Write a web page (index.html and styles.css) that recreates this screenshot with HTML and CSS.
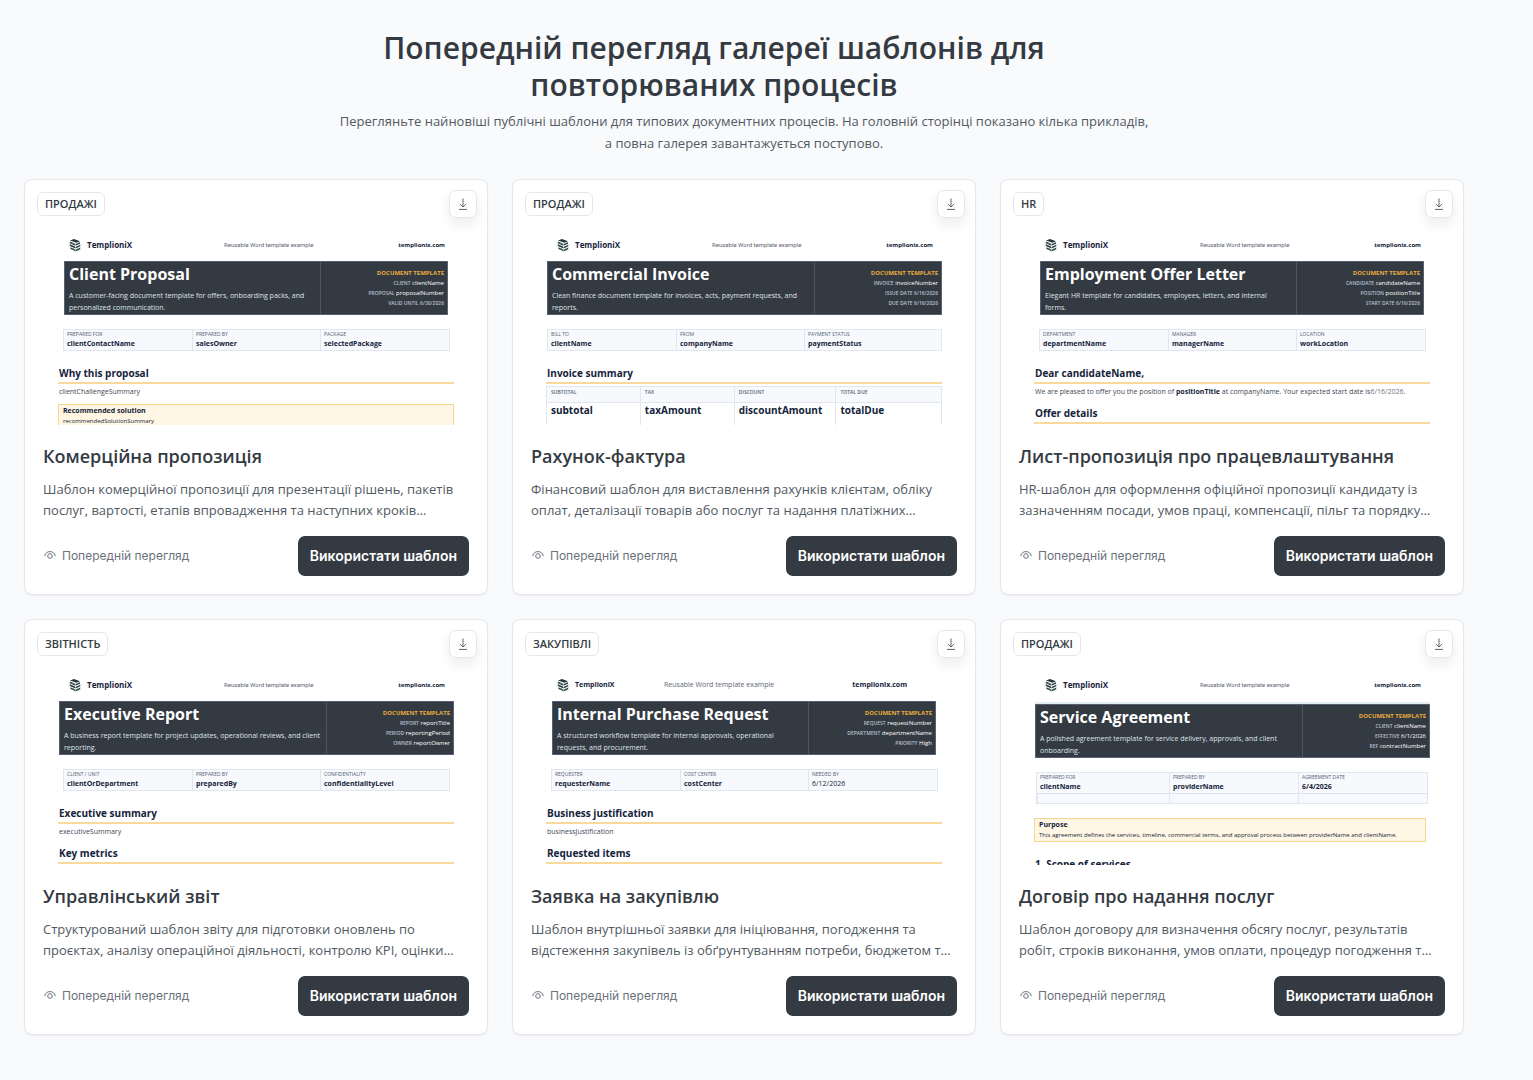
FILE: index.html
```html
<!DOCTYPE html>
<html lang="uk">
<head>
    <meta charset="UTF-8">
    <meta name="viewport" content="width=device-width, initial-scale=1.0">
    <title>TemplioniX</title>
    <link rel="stylesheet" href="styles.css">
</head>
<body>
    <!-- shared icons -->
    <svg class="sprite" aria-hidden="true">
        <symbol id="icon-download" viewBox="0 0 14 14">
            <path d="M7 1.5v8.3M3.9 7L7 10l3.1-3M3 12.4h8" fill="none" stroke="currentColor" stroke-width="1"/>
        </symbol>
        <symbol id="icon-eye" viewBox="0 0 14 14">
            <path d="M1.6 8.2C2.3 5 4.4 3.6 7 3.6s4.700 1.400 5.400 4.600" fill="none" stroke="currentColor" stroke-width="1"/>
            <circle cx="7" cy="8" r="2.300" fill="none" stroke="currentColor" stroke-width="1"/>
        </symbol>
        <symbol id="icon-logo" viewBox="0 0 14 14">
            <path d="M2 2.600L6 1l6 2.200-3.500 1.600zM2 3.500l5 2.300v1.700L2 5.200zM12 4.200v1.600L7.500 7.800V6.200zM2 6.300l5 2.300v1.700L2 8zM12 7v1.600l-4.500 2V9zM2.500 9.300L7 11.300V13L2.500 11zM12 9.800v1.500L7.500 13.400v-1.600z" fill="#26343c"/>
            <path d="M3.500 4.600l3.500 1.600 4.500-2M3.500 10.300L7 12l4-1.800M1.400 4v5M12.700 6v6" fill="none" stroke="#7fb5a5" stroke-width=".4"/>
        </symbol>
    </svg>

    <section class="gallery">
        <header class="gallery-header">
            <h1>Попередній перегляд галереї шаблонів для повторюваних процесів</h1>
            <p>Перегляньте найновіші публічні шаблони для типових документних процесів. На головній сторінці показано кілька прикладів, а повна галерея завантажується поступово.</p>
        </header>

        <div class="grid">
            <article class="card">
                <span class="badge">ПРОДАЖІ</span>
                <button type="button" class="download" aria-label="Завантажити"><svg><use href="#icon-download"/></svg></button>
                <div class="preview">
                    <div class="doc-head">
                        <span class="brand"><svg><use href="#icon-logo"/></svg>TemplioniX</span>
                        <span class="tagline">Reusable Word template example</span>
                        <span class="domain">templionix.com</span>
                    </div>
                    <div class="banner inset">
                        <div class="banner-main">
                            <strong>Client Proposal</strong>
                            <p>A customer-facing document template for offers, onboarding packs, and<br>personalized communication.</p>
                        </div>
                        <div class="banner-side">
                            <b>DOCUMENT TEMPLATE</b>
                            <div><i>CLIENT</i> clientName</div>
                            <div><i>PROPOSAL</i> proposalNumber</div>
                            <div><i>VALID UNTIL</i> <i>6/30/2026</i></div>
                        </div>
                    </div>
                    <div class="facts narrow">
                        <div><span>PREPARED FOR</span><b>clientContactName</b></div>
                        <div><span>PREPARED BY</span><b>salesOwner</b></div>
                        <div><span>PACKAGE</span><b>selectedPackage</b></div>
                    </div>
                    <h3>Why this proposal</h3>
                    <p class="doc-text">clientChallengeSummary</p>
                    <div class="note">
                        <b>Recommended solution</b>
                        <p>recommendedSolutionSummary</p>
                    </div>
                </div>
                <div class="card-body">
                    <h2>Комерційна пропозиція</h2>
                    <p class="description">Шаблон комерційної пропозиції для презентації рішень, пакетів послуг, вартості, етапів впровадження та наступних кроків…</p>
                    <div class="actions">
                        <button type="button" class="btn-preview"><svg><use href="#icon-eye"/></svg>Попередній перегляд</button>
                        <button type="button" class="btn">Використати шаблон</button>
                    </div>
                </div>
            </article>

            <article class="card">
                <span class="badge">ПРОДАЖІ</span>
                <button type="button" class="download" aria-label="Завантажити"><svg><use href="#icon-download"/></svg></button>
                <div class="preview">
                    <div class="doc-head">
                        <span class="brand"><svg><use href="#icon-logo"/></svg>TemplioniX</span>
                        <span class="tagline">Reusable Word template example</span>
                        <span class="domain">templionix.com</span>
                    </div>
                    <div class="banner">
                        <div class="banner-main">
                            <strong>Commercial Invoice</strong>
                            <p>Clean finance document template for invoices, acts, payment requests, and<br>reports.</p>
                        </div>
                        <div class="banner-side">
                            <b>DOCUMENT TEMPLATE</b>
                            <div><i>INVOICE</i> invoiceNumber</div>
                            <div><i>ISSUE DATE</i> <i>6/16/2026</i></div>
                            <div><i>DUE DATE</i> <i>6/16/2026</i></div>
                        </div>
                    </div>
                    <div class="facts">
                        <div><span>BILL TO</span><b>clientName</b></div>
                        <div><span>FROM</span><b>companyName</b></div>
                        <div><span>PAYMENT STATUS</span><b>paymentStatus</b></div>
                    </div>
                    <h3>Invoice summary</h3>
                    <table class="totals">
                        <thead>
                            <tr><th>SUBTOTAL</th><th>TAX</th><th>DISCOUNT</th><th>TOTAL DUE</th></tr>
                        </thead>
                        <tbody>
                            <tr><td>subtotal</td><td>taxAmount</td><td>discountAmount</td><td>totalDue</td></tr>
                        </tbody>
                    </table>
                </div>
                <div class="card-body">
                    <h2>Рахунок-фактура</h2>
                    <p class="description">Фінансовий шаблон для виставлення рахунків клієнтам, обліку оплат, деталізації товарів або послуг та надання платіжних…</p>
                    <div class="actions">
                        <button type="button" class="btn-preview"><svg><use href="#icon-eye"/></svg>Попередній перегляд</button>
                        <button type="button" class="btn">Використати шаблон</button>
                    </div>
                </div>
            </article>

            <article class="card">
                <span class="badge">HR</span>
                <button type="button" class="download" aria-label="Завантажити"><svg><use href="#icon-download"/></svg></button>
                <div class="preview">
                    <div class="doc-head">
                        <span class="brand"><svg><use href="#icon-logo"/></svg>TemplioniX</span>
                        <span class="tagline">Reusable Word template example</span>
                        <span class="domain">templionix.com</span>
                    </div>
                    <div class="banner inset">
                        <div class="banner-main">
                            <strong>Employment Offer Letter</strong>
                            <p>Elegant HR template for candidates, employees, letters, and internal<br>forms.</p>
                        </div>
                        <div class="banner-side">
                            <b>DOCUMENT TEMPLATE</b>
                            <div><i>CANDIDATE</i> candidateName</div>
                            <div><i>POSITION</i> positionTitle</div>
                            <div><i>START DATE</i> <i>6/16/2026</i></div>
                        </div>
                    </div>
                    <div class="facts narrow">
                        <div><span>DEPARTMENT</span><b>departmentName</b></div>
                        <div><span>MANAGER</span><b>managerName</b></div>
                        <div><span>LOCATION</span><b>workLocation</b></div>
                    </div>
                    <h3>Dear candidateName,</h3>
                    <p class="doc-text">We are pleased to offer you the position of <b>positionTitle</b> at companyName. Your expected start date is<span>6/16/2026</span>.</p>
                    <h3>Offer details</h3>
                </div>
                <div class="card-body">
                    <h2>Лист-пропозиція про працевлаштування</h2>
                    <p class="description">HR-шаблон для оформлення офіційної пропозиції кандидату із зазначенням посади, умов праці, компенсації, пільг та порядку…</p>
                    <div class="actions">
                        <button type="button" class="btn-preview"><svg><use href="#icon-eye"/></svg>Попередній перегляд</button>
                        <button type="button" class="btn">Використати шаблон</button>
                    </div>
                </div>
            </article>

            <article class="card">
                <span class="badge">ЗВІТНІСТЬ</span>
                <button type="button" class="download" aria-label="Завантажити"><svg><use href="#icon-download"/></svg></button>
                <div class="preview">
                    <div class="doc-head">
                        <span class="brand"><svg><use href="#icon-logo"/></svg>TemplioniX</span>
                        <span class="tagline">Reusable Word template example</span>
                        <span class="domain">templionix.com</span>
                    </div>
                    <div class="banner">
                        <div class="banner-main">
                            <strong>Executive Report</strong>
                            <p>A business report template for project updates, operational reviews, and client<br>reporting.</p>
                        </div>
                        <div class="banner-side">
                            <b>DOCUMENT TEMPLATE</b>
                            <div><i>REPORT</i> reportTitle</div>
                            <div><i>PERIOD</i> reportingPeriod</div>
                            <div><i>OWNER</i> reportOwner</div>
                        </div>
                    </div>
                    <div class="facts narrow">
                        <div><span>CLIENT / UNIT</span><b>clientOrDepartment</b></div>
                        <div><span>PREPARED BY</span><b>preparedBy</b></div>
                        <div><span>CONFIDENTIALITY</span><b>confidentialityLevel</b></div>
                    </div>
                    <h3>Executive summary</h3>
                    <p class="doc-text">executiveSummary</p>
                    <h3>Key metrics</h3>
                </div>
                <div class="card-body">
                    <h2>Управлінський звіт</h2>
                    <p class="description">Структурований шаблон звіту для підготовки оновлень по проєктах, аналізу операційної діяльності, контролю KPI, оцінки…</p>
                    <div class="actions">
                        <button type="button" class="btn-preview"><svg><use href="#icon-eye"/></svg>Попередній перегляд</button>
                        <button type="button" class="btn">Використати шаблон</button>
                    </div>
                </div>
            </article>

            <article class="card">
                <span class="badge">ЗАКУПІВЛІ</span>
                <button type="button" class="download" aria-label="Завантажити"><svg><use href="#icon-download"/></svg></button>
                <div class="preview">
                    <div class="doc-head doc-head-wide">
                        <span class="brand"><svg><use href="#icon-logo"/></svg>TemplioniX</span>
                        <span class="tagline">Reusable Word template example</span>
                        <span class="domain">templionix.com</span>
                    </div>
                    <div class="banner inset">
                        <div class="banner-main">
                            <strong>Internal Purchase Request</strong>
                            <p>A structured workflow template for internal approvals, operational<br>requests, and procurement.</p>
                        </div>
                        <div class="banner-side">
                            <b>DOCUMENT TEMPLATE</b>
                            <div><i>REQUEST</i> requestNumber</div>
                            <div><i>DEPARTMENT</i> departmentName</div>
                            <div><i>PRIORITY</i> High</div>
                        </div>
                    </div>
                    <div class="facts narrow">
                        <div><span>REQUESTER</span><b>requesterName</b></div>
                        <div><span>COST CENTER</span><b>costCenter</b></div>
                        <div><span>NEEDED BY</span><em>6/12/2026</em></div>
                    </div>
                    <h3>Business justification</h3>
                    <p class="doc-text">businessJustification</p>
                    <h3>Requested items</h3>
                </div>
                <div class="card-body">
                    <h2>Заявка на закупівлю</h2>
                    <p class="description">Шаблон внутрішньої заявки для ініціювання, погодження та відстеження закупівель із обґрунтуванням потреби, бюджетом т…</p>
                    <div class="actions">
                        <button type="button" class="btn-preview"><svg><use href="#icon-eye"/></svg>Попередній перегляд</button>
                        <button type="button" class="btn">Використати шаблон</button>
                    </div>
                </div>
            </article>

            <article class="card">
                <span class="badge">ПРОДАЖІ</span>
                <button type="button" class="download" aria-label="Завантажити"><svg><use href="#icon-download"/></svg></button>
                <div class="preview">
                    <div class="doc-head">
                        <span class="brand"><svg><use href="#icon-logo"/></svg>TemplioniX</span>
                        <span class="tagline">Reusable Word template example</span>
                        <span class="domain">templionix.com</span>
                    </div>
                    <div class="banner ruled">
                        <div class="banner-main">
                            <strong>Service Agreement</strong>
                            <p>A polished agreement template for service delivery, approvals, and client<br>onboarding.</p>
                        </div>
                        <div class="banner-side">
                            <b>DOCUMENT TEMPLATE</b>
                            <div><i>CLIENT</i> clientName</div>
                            <div><i>EFFECTIVE</i> 6/1/2026</div>
                            <div><i>REF</i> contractNumber</div>
                        </div>
                    </div>
                    <div class="facts two-rows">
                        <div><span>PREPARED FOR</span><b>clientName</b></div>
                        <div><span>PREPARED BY</span><b>providerName</b></div>
                        <div><span>AGREEMENT DATE</span><b>6/4/2026</b></div>
                        <div></div>
                        <div></div>
                        <div></div>
                    </div>
                    <div class="note purpose">
                        <b>Purpose</b>
                        <p>This agreement defines the services, timeline, commercial terms, and approval process between providerName and clientName.</p>
                    </div>
                    <h3>1. Scope of services</h3>
                </div>
                <div class="card-body">
                    <h2>Договір про надання послуг</h2>
                    <p class="description">Шаблон договору для визначення обсягу послуг, результатів робіт, строків виконання, умов оплати, процедур погодження т…</p>
                    <div class="actions">
                        <button type="button" class="btn-preview"><svg><use href="#icon-eye"/></svg>Попередній перегляд</button>
                        <button type="button" class="btn">Використати шаблон</button>
                    </div>
                </div>
            </article>
        </div>
    </section>
</body>
</html>
```
FILE: styles.css
```css
* {
    box-sizing: border-box;
}

body {
    font-family: "Open Sans", "Noto Sans", sans-serif;
    margin: 0;
    background-color: #f9fafc;
    color: #343a42;
}

h1, h2, h3, p {
    margin: 0;
}

button {
    font-family: Inter, sans-serif;
    cursor: pointer;
}

.sprite {
    display: none;
}

.gallery {
    max-width: 1488px;
    padding: 29px 24px 45px;
}

.gallery-header {
    text-align: center;
    margin-bottom: 25px;
}

.gallery-header h1 {
    max-width: 780px;
    margin: 0 auto;
    padding-right: 60px;
    font-size: 30px;
    line-height: 37px;
    font-weight: 600;
}

.gallery-header p {
    max-width: 814px;
    margin: 7px auto 0;
    font-size: 13px;
    line-height: 22px;
    color: #515963;
}

.grid {
    display: grid;
    grid-template-columns: repeat(3, 1fr);
    gap: 24px;
}

.card {
    position: relative;
    background-color: #ffffff;
    border: 1px solid #e5e7eb;
    border-radius: 8px;
    overflow: hidden;
    box-shadow: 0 1px 2px rgba(0, 0, 0, 0.05);
}

.badge {
    position: absolute;
    top: 12px;
    left: 12px;
    height: 24px;
    padding: 0 7px;
    border: 1px solid #e5e7eb;
    border-radius: 6px;
    background-color: #ffffff;
    font-size: 11px;
    line-height: 22px;
    font-weight: 600;
}

.download {
    position: absolute;
    top: 10px;
    right: 10px;
    width: 28px;
    height: 28px;
    display: flex;
    align-items: center;
    justify-content: center;
    padding: 0;
    border: 1px solid #e5e7eb;
    border-radius: 7px;
    background-color: #ffffff;
    color: #5f656c;
    box-shadow: 0 6px 14px rgba(15, 23, 42, 0.08);
}

.download svg {
    width: 14px;
    height: 14px;
}

/* document thumbnail */
.preview {
    height: 245px;
    padding: 56px 33px 0;
    overflow: hidden;
    color: #14233a;
    font-size: 7px;
    line-height: 12px;
}

.doc-head {
    display: grid;
    grid-template-columns: 156px 1fr auto;
    align-items: center;
    height: 17px;
    padding: 0 9px 0 10px;
}

.brand {
    display: flex;
    align-items: center;
    gap: 5px;
    font-size: 8px;
    font-weight: 700;
}

.brand svg {
    width: 14px;
    height: 14px;
}

.tagline {
    font-family: Roboto, sans-serif;
    font-size: 6px;
    color: #5d6672;
}

.domain {
    font-size: 6px;
    font-weight: 700;
}

.doc-head-wide {
    grid-template-columns: 108px 1fr auto;
    padding-right: 35px;
}

.doc-head-wide .brand,
.doc-head-wide .tagline,
.doc-head-wide .domain {
    font-family: inherit;
    font-size: 7px;
}

.banner {
    display: flex;
    height: 54px;
    margin: 8px 0 14px 1px;
    border: 1px solid #566273;
    background-color: #343a42;
    color: #ffffff;
}

.banner.inset {
    margin-left: 6px;
    margin-right: 6px;
}

.banner.ruled {
    height: 54px;
    margin-top: 11px;
    box-shadow: 0 -2px 0 #e3eef2;
}

.banner-main {
    flex: 1;
    padding-left: 4px;
    white-space: nowrap;
}

.banner-main strong {
    display: block;
    font-size: 16px;
    line-height: 24px;
}

.banner-main p {
    margin-top: 4px;
    color: #dde3ea;
}

.banner-side {
    flex: 0 0 127px;
    padding: 6px 3px 0 0;
    border-left: 1px solid #4b5666;
    text-align: right;
    font-size: 6px;
    line-height: 10px;
}

.banner-side b {
    display: block;
    color: #e9ac3d;
    font-size: 6px;
}

.banner-side i {
    font-size: 5px;
    font-style: normal;
    font-weight: 600;
    color: #b4c0d2;
}

.facts {
    display: grid;
    grid-template-columns: 128px 128px 1fr;
    margin-left: 1px;
    border: 1px solid #e1e7ef;
    background-color: #f7f9fd;
}

.facts.narrow {
    margin-left: 5px;
    margin-right: 4px;
}

.facts div {
    height: 20px;
    padding: 0 3px;
}

.facts div + div {
    border-left: 1px solid #e1e7ef;
}

.facts span,
.facts b,
.facts em {
    display: block;
    font-style: normal;
}

.facts span {
    font-size: 5px;
    line-height: 9px;
    color: #536073;
}

.facts b,
.facts em {
    font-size: 7px;
    line-height: 10px;
}

.facts.two-rows {
    grid-template-columns: 132px 129px 1fr;
    margin-left: 2px;
    margin-right: 2px;
}

.facts.two-rows div:nth-child(n + 4) {
    height: 10px;
    border-top: 1px solid #dbe4ee;
}

.preview h3 {
    margin-top: 14px;
    padding-left: 1px;
    border-bottom: 2px solid #fad99c;
    font-size: 10px;
    line-height: 17px;
    font-weight: 700;
}

.doc-text {
    padding: 2px 1px 0;
    white-space: nowrap;
    color: #3d4856;
}

.doc-text b {
    color: #14233a;
}

.doc-text span {
    color: #6d7683;
}

.doc-text + h3 {
    margin-top: 7px;
}

.note {
    margin-top: 6px;
    padding: 0 4px;
    border: 1px solid #f5d58f;
    background-color: #fff6e4;
    white-space: nowrap;
    line-height: 11px;
}

.note b {
    display: block;
}

.note p {
    font-size: 6px;
}

.note.purpose {
    margin: 14px 4px 0 0;
}

.totals {
    width: 100%;
    margin-top: 2px;
    border-collapse: collapse;
    table-layout: fixed;
    text-align: left;
}

.totals th,
.totals td {
    padding: 0 4px;
    border: 1px solid #e1e7ef;
}

.totals th {
    width: 24%;
    height: 16px;
    padding-bottom: 6px;
    background-color: #f7f9fd;
    font-size: 5px;
    line-height: 8px;
    font-weight: 600;
    color: #536073;
}

.totals th:nth-child(3) {
    width: 26%;
}

.totals th:last-child {
    width: 27%;
}

.totals td {
    height: 30px;
    font-size: 10px;
    line-height: 14px;
    font-weight: 700;
    vertical-align: top;
}

/* card text and buttons */
.card-body {
    padding: 18px;
}

.card-body h2 {
    font-size: 18px;
    line-height: 26px;
    font-weight: 600;
}

.description {
    margin-top: 10px;
    font-size: 13px;
    line-height: 21px;
    color: #515963;
}

.actions {
    display: flex;
    align-items: center;
    justify-content: space-between;
    margin-top: 15px;
}

.btn-preview {
    display: flex;
    align-items: center;
    gap: 5px;
    padding: 0 0 2px;
    border: none;
    background: none;
    font-size: 12px;
    color: #6b727b;
}

.btn-preview svg {
    width: 14px;
    height: 14px;
}

.btn {
    height: 40px;
    padding: 0 12px 2px;
    border: none;
    border-radius: 7px;
    background-color: #343a42;
    color: #ffffff;
    font-size: 14px;
    font-weight: 600;
}
```
